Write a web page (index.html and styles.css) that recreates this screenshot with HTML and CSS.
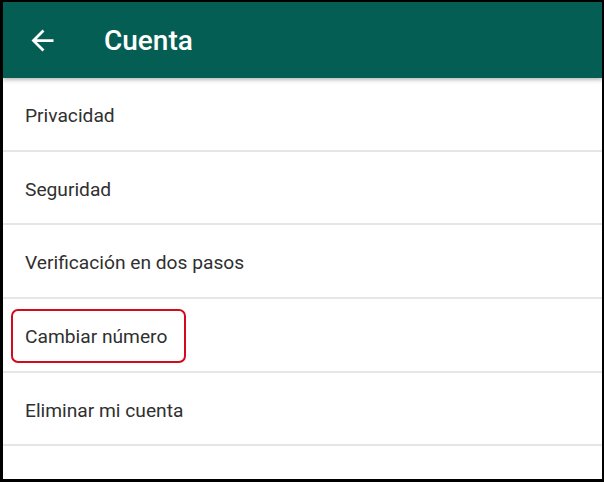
FILE: index.html
```html
<!DOCTYPE html>
<html lang="es">
<head>
  <meta charset="UTF-8">
  <title>Cuenta</title>
  <link rel="stylesheet" href="styles.css">
</head>
<body>
  <div class="screen">
    <header class="appbar">
      <svg class="back" viewBox="0 0 24 24" width="33" height="33">
        <path d="M20 11H7.83l5.59-5.59L12 4l-8 8 8 8 1.41-1.41L7.83 13H20v-2z" fill="#fff"/>
      </svg>
      <h1>Cuenta</h1>
    </header>
    <ul class="menu">
      <li>Privacidad</li>
      <li>Seguridad</li>
      <li>Verificación en dos pasos</li>
      <li><span class="mark">Cambiar número</span></li>
      <li>Eliminar mi cuenta</li>
    </ul>
  </div>
</body>
</html>
```

FILE: styles.css
```css
html, body { margin: 0; height: 100%; }
body { background: #000; font-family: Roboto, "Noto Sans", sans-serif; }
.screen { position: absolute; top: 2px; left: 3px; right: 2px; bottom: 3px; background: #fff; overflow: hidden; }
.appbar { height: 76px; background: #055e54; display: flex; align-items: center; box-shadow: 0 2px 4px rgba(0,0,0,0.28); position: relative; z-index: 1; }
.back { margin-left: 23px; }
.appbar h1 { margin: 0 0 0 45px; color: #fff; font-size: 28px; font-weight: 500; }
.menu { list-style: none; margin: 0; padding: 0; }
.menu li { box-sizing: border-box; height: 73.7px; padding-top: 3px; border-bottom: 2px solid #e6e6e6; display: flex; align-items: center; padding-left: 22px; font-size: 19.2px; color: #303030; }
.mark { display: inline-flex; align-items: center; height: 50px; margin-left: -14px; padding: 0 17px 0 12px; border: 2px solid #d3091c; border-radius: 7px; }
```
